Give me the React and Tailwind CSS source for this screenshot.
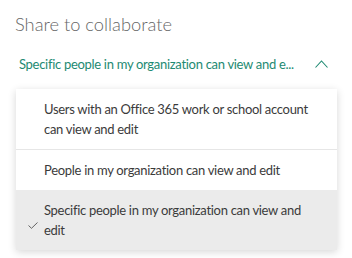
import { useState } from "react";

const OPTIONS = [
  "Users with an Office 365 work or school account can view and edit",
  "People in my organization can view and edit",
  "Specific people in my organization can view and edit",
];

export default function App() {
  const [selected, setSelected] = useState(2);

  return (
    <div className="w-[352px] h-[258px] bg-white overflow-hidden font-['Lato',sans-serif]">
      <h1 className="pl-[15px] pt-[11px] text-[18.3px] leading-[26px] font-light text-[#666666]">
        Share to collaborate
      </h1>

      {/* Dropdown trigger, label shown clipped as in the app */}
      <button
        title={OPTIONS[selected]}
        className="flex items-center pl-[19px] mt-[17px] text-left"
      >
        <span className="w-[286px] whitespace-nowrap overflow-hidden text-[13px] leading-[20px] tracking-[-0.3px] text-[#1e8a72]">
          Specific people in my organization can view and e...
        </span>
        <svg className="ml-[10px] w-[13px] h-[8px]" viewBox="0 0 13 8" fill="none">
          <path d="M0.5 7.5 L6.5 1 L12.5 7.5" stroke="#1e8a72" strokeWidth="1.1" />
        </svg>
      </button>

      {/* Menu */}
      <div className="mt-[15px] ml-[16px] w-[321px] bg-white shadow-[0_2px_8px_rgba(0,0,0,0.16)]">
        {OPTIONS.map((opt, i) => (
          <div
            key={i}
            onClick={() => setSelected(i)}
            className={`relative pl-[28px] pr-[14px] py-[10px] text-[13px] leading-[20px] tracking-[-0.3px] text-[#3b3b3b] ${
              i === 0 ? "border-b border-[#e6e6e6] py-[9px]" : ""
            } ${selected === i ? "bg-[#ebebeb]" : ""}`}
          >
            {selected === i && (
              <svg className="absolute left-[12px] top-[32px] w-[10px] h-[7px]" viewBox="0 0 10 7" fill="none">
                <path d="M0.5 3.5 L3.5 6.3 L9.5 0.5" stroke="#555" strokeWidth="0.9" />
              </svg>
            )}
            <span>{opt}</span>
          </div>
        ))}
      </div>
    </div>
  );
}
